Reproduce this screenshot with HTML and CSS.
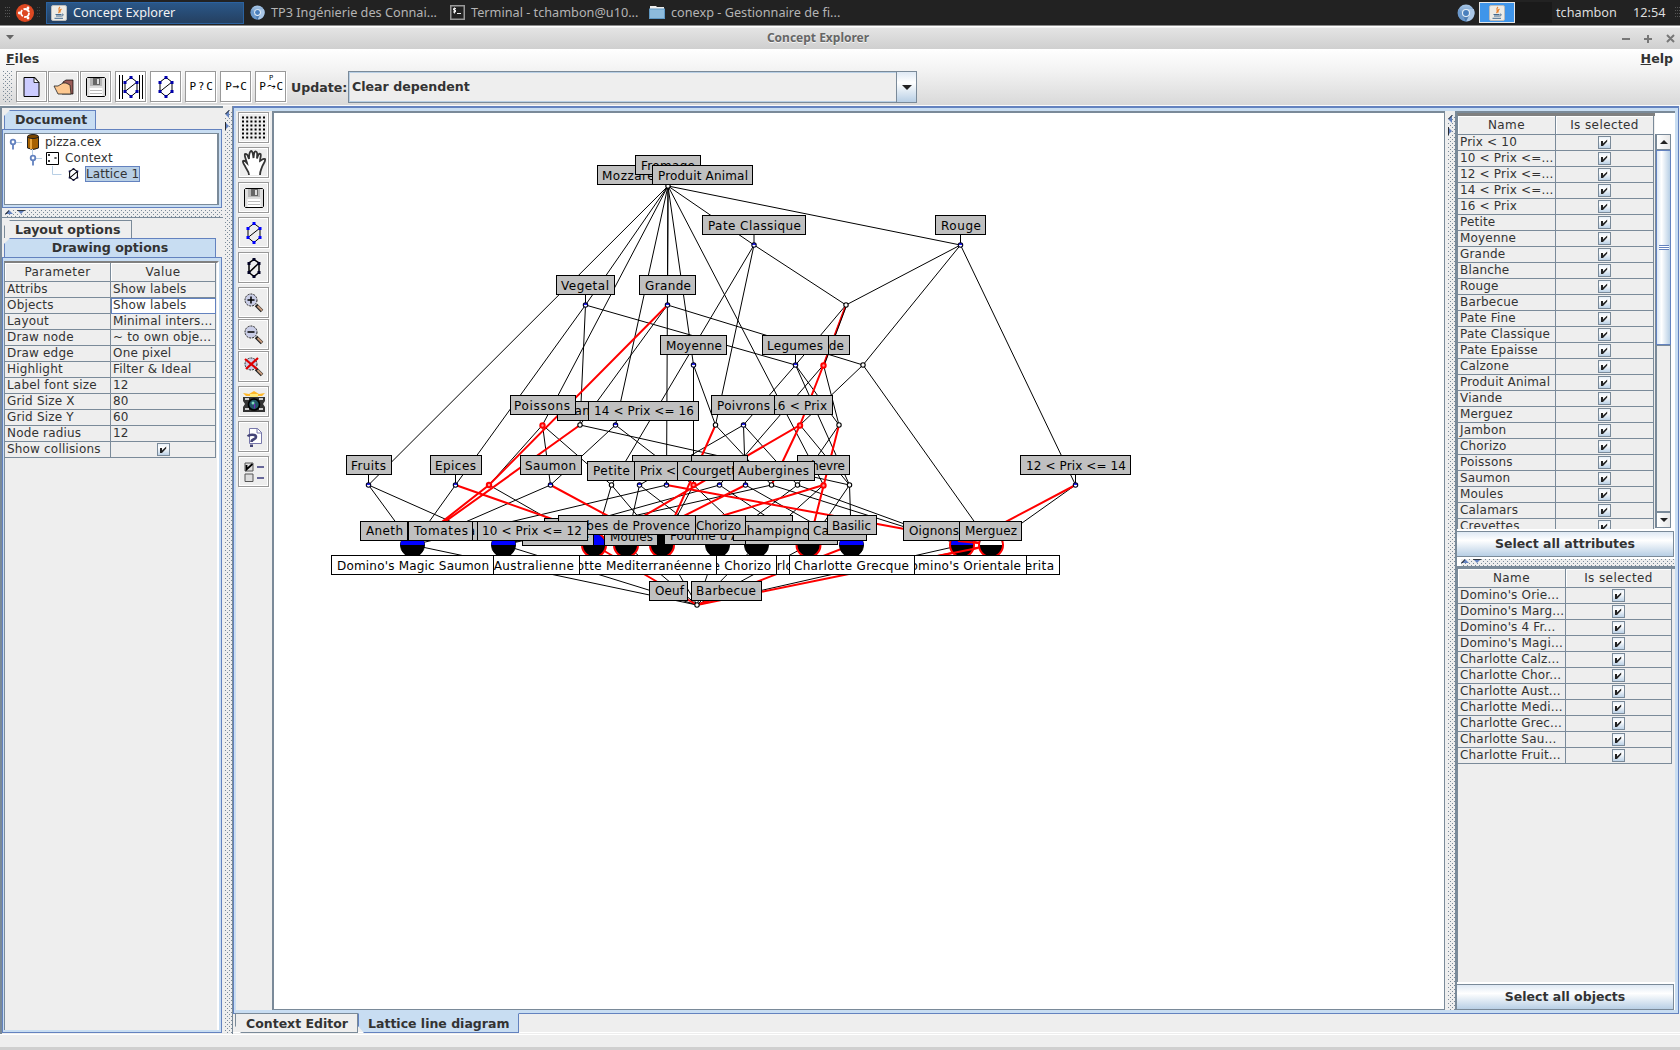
FILE: index.html
```html
<!DOCTYPE html>
<html lang="fr">
<head>
<meta charset="utf-8">
<title>Concept Explorer</title>
<link rel="stylesheet" href="styles.css">
</head>
<body>
<svg class="defs" width="0" height="0">
  <defs>
    <linearGradient id="box" x1="0" y1="0" x2="0" y2="1"><stop offset="0" stop-color="#e6eff8"/><stop offset=".35" stop-color="#fff"/><stop offset="1" stop-color="#b8cfe5"/></linearGradient>
    <linearGradient id="blueball" x1="0" y1="0" x2="0" y2="1"><stop offset="0" stop-color="#a9c8e8"/><stop offset="1" stop-color="#3c6ea8"/></linearGradient>
    <linearGradient id="half" x1="0" y1="0" x2="0" y2="1"><stop offset=".5" stop-color="#22f"/><stop offset=".5" stop-color="#fff"/></linearGradient>
    <symbol id="check" viewBox="0 0 13 13"><rect x=".5" y=".5" width="12" height="12" fill="url(#box)" stroke="#7a8a99"/><path d="M3 5h2v2.600L9.200 3.400V5.600L5 10H3z" fill="#222"/></symbol>
    <symbol id="java" viewBox="0 0 16 16"><rect x=".5" y=".5" width="15" height="15" rx="1.500" fill="#ecebe6" stroke="#bbb"/><path d="M9 2C6 4.500 10 5.500 7.500 8M10.500 4C8.500 5 9.500 6 8.800 7.500" fill="none" stroke="#e8802a" stroke-width="1.200"/><path d="M4.500 9.500h6M5 11h5.500M3.500 13.300h8.500M11 9c2 0 1.500 2-.5 2" fill="none" stroke="#41688f"/></symbol>
    <symbol id="chromium" viewBox="0 0 16 16"><circle cx="8" cy="8" r="7.500" fill="url(#blueball)"/><path d="M8 4.500h6.800A7.500 7.500 0 0 1 8 15.500L11 10z" fill="#a9c6e6"/><path d="M2 4l3 6 3 5.500A7.500 7.500 0 0 1 2 4z" fill="#6b98cb"/><circle cx="8" cy="8" r="3.600" fill="#e6eff8"/><circle cx="8" cy="8" r="2.600" fill="#4a7fbd"/></symbol>
    <symbol id="floppy" viewBox="0 0 20 20"><path d="M1.500.5h17l1 1v17l-1 1h-17l-1-1v-17z" fill="#ddd" stroke="#000"/><path d="M4 1h12v8H4z" fill="#b5b5b5"/><path d="M7 1h7v7H7z" fill="#666"/><path d="M11 2h2v5h-2z" fill="#ddd"/><path d="M3.500 11h13v8h-13z" fill="#fff"/><path d="M4 13.500h12M4 16.500h12" stroke="#bbb"/></symbol>
    <symbol id="hex" viewBox="0 0 16 24"><path d="M8 2.500L14 7v9.500L8 21.500 2 16.500V7zM2 16.500L14 7" fill="none" stroke="#000"/><path d="M6.500 1h3v3h-3zM.5 6h3v3h-3zM12.500 6h3v3h-3zM.5 15h3v3h-3zM12.500 15h3v3h-3zM6.500 20h3v3h-3z" fill="currentColor"/></symbol>
    <symbol id="lens" viewBox="0 0 20 20"><path d="M12 12l6 6" stroke="#222" stroke-width="3.600"/><path d="M13.500 13l4.500 4.500" stroke="#c69a7c" stroke-width="2"/><circle cx="7" cy="7" r="6" fill="#c9cde6" stroke="#222" stroke-dasharray="2 1"/></symbol>
    <symbol id="up" viewBox="0 0 8 4"><path d="M0 4L4 0l4 4z" fill="#6382bf"/><path d="M0 4L4 0v1L1.500 4z" fill="#222"/></symbol>
    <symbol id="down" viewBox="0 0 8 4"><path d="M0 0l4 4 4-4z" fill="#6382bf"/><path d="M0 0h8v.8H0z" fill="#222"/></symbol>
    <symbol id="left" viewBox="0 0 4 8"><path d="M4 0L0 4l4 4z" fill="#6382bf"/><path d="M4 0L0 4h1l3-3z" fill="#222"/></symbol>
    <symbol id="right" viewBox="0 0 4 8"><path d="M0 0l4 4-4 4z" fill="#6382bf"/><path d="M0 0h.9v8H0z" fill="#222"/></symbol>
  </defs>
</svg>

<header class="panel">
  <span class="grip"></span>
  <svg class="ubuntu" width="18" height="18" viewBox="0 0 18 18"><circle cx="9" cy="9" r="9" fill="#dd4822"/><circle cx="9" cy="9" r="4" fill="none" stroke="#fff" stroke-width="1.800" stroke-dasharray="7 1.400"/><circle cx="3.300" cy="9" r="1.400" fill="#fff"/><circle cx="12" cy="4" r="1.400" fill="#fff"/><circle cx="12" cy="14" r="1.400" fill="#fff"/></svg>
  <span class="grip dim"></span>
  <div class="task active"><svg width="16" height="16"><use href="#java"/></svg><span>Concept Explorer</span></div>
  <div class="task second"><svg width="15" height="15"><use href="#chromium"/></svg><span>TP3 Ingénierie des Connai...</span></div>
  <div class="task third"><svg width="15" height="15" viewBox="0 0 15 15"><rect x=".75" y=".75" width="13.500" height="13.500" fill="#222" stroke="#999" stroke-width="1.500"/><path d="M6 3.500H3.500V5H5.500V7H3M4.500 2.500v6M7 8.500h4" stroke="#eee" fill="none"/></svg><span>Terminal - tchambon@u10...</span></div>
  <div class="task fourth"><svg width="16" height="13" viewBox="0 0 16 13"><path d="M1 0h6l1 1h7v4H1z" fill="#eee"/><rect x=".5" y="3" width="15" height="9.500" fill="#8dbbdc" stroke="#5f98c4"/></svg><span>conexp - Gestionnaire de fi...</span></div>
  <svg class="tray" width="18" height="18"><use href="#chromium"/></svg>
  <div class="pager on"><svg width="16" height="16"><use href="#java"/></svg></div>
  <div class="pager"></div>
  <span class="user">tchambon</span>
  <span class="clock">12:54</span>
  <span class="grip end"></span>
</header>

<div class="titlebar">
  <svg width="8" height="5" viewBox="0 0 8 5"><path d="M0 0h8L4 4.500z" fill="#666"/></svg>
  <b>Concept Explorer</b>
  <svg class="winbtns" width="54" height="10" viewBox="0 0 54 10"><path d="M0 5h8M22 5h8M26 1v8M45 1l7 7M52 1l-7 7" stroke="#777" stroke-width="2" fill="none"/></svg>
</div>

<nav class="menubar"><span class="files"><u>F</u>iles</span><span class="help"><u>H</u>elp</span></nav>

<div class="toolbar">
  <span class="dots handle"></span>
  <button class="btn"><svg width="19" height="22" viewBox="0 0 19 22"><path d="M2 1.500h11l4 5v14H2z" fill="#ccf" stroke="#000"/><path d="M12 1.500v5h5z" fill="#fff" stroke="#000" stroke-width=".8"/></svg></button>
  <button class="btn g1"><svg width="22" height="18" viewBox="0 0 22 18"><path d="M10 4l3-2h7v14H9z" fill="#9a5c58" stroke="#000" stroke-width=".7"/><path d="M1 8h4l5-3h3l4 2 1 9H5z" fill="#fdc890" stroke="#222" stroke-width=".8"/></svg></button>
  <button class="btn g1"><svg width="20" height="20"><use href="#floppy"/></svg></button>
  <button class="btn w g4"><svg width="26" height="26" viewBox="0 0 26 26"><path d="M1.500 1v24M4.500 1v24M21.500 1v24M24.500 1v24" stroke="#000"/><use href="#hex" x="5" y="1" width="16" height="24" color="#00a"/></svg></button>
  <button class="btn w g4"><svg width="16" height="24" color="#00a"><use href="#hex"/></svg></button>
  <button class="btn w g4 mono">P?C</button>
  <button class="btn w g4 mono tight">P→C</button>
  <button class="btn w g4 mono tight"><i>P</i>P⤳C</button>
  <label class="update">Update:</label>
  <div class="combo"><span>Clear dependent</span><div class="arrow"><svg width="10" height="5" viewBox="0 0 10 5"><path d="M0 0h10L5 5z" fill="#222"/></svg></div></div>
</div>

<main class="main">
  <aside class="left">
    <div class="tabrow"><span class="tab sel doc">Document</span></div>
    <div class="tabbody doc">
      <div class="tree">
        <svg class="lines" width="64" height="56" viewBox="0 0 64 56"><path d="M10 8.500h7M27.500 15v9M31 24.500h6M47.500 32v8.500h9" stroke="#b8cfe5" fill="none"/><g fill="#fff" stroke="#6382bf" stroke-width="1.800"><circle cx="8" cy="8" r="2.300"/><path d="M8 10.500v5"/><circle cx="28" cy="24" r="2.300"/><path d="M28 26.500v5"/></g></svg>
        <div class="ti a"><svg width="12" height="16" viewBox="0 0 12 16"><path d="M.5 3v11q5.500 3 11 0V3z" fill="#a86200" stroke="#222"/><path d="M3 4h2v11H3z" fill="#e9a53c"/><ellipse cx="6" cy="2.500" rx="5.500" ry="2" fill="#7a4600" stroke="#222"/></svg>pizza.cex</div>
        <div class="ti b"><svg width="13" height="13" viewBox="0 0 13 13"><path d="M.5.500h12v12H.5z" fill="#fff" stroke="#000"/><path d="M2 2l2 2M4 2L2 4M8.500 5l2 2M10.500 5l-2 2M2 8l2 2M4 8l-2 2" stroke="#000" stroke-width=".8"/></svg>Context</div>
        <div class="ti c"><svg width="11" height="15" viewBox="0 0 11 15"><path d="M5.500 1L10 4v7l-4.500 3L1 11V4zM1.500 11L10 4" fill="none" stroke="#000" stroke-width="1.200"/><path d="M4.500 0h2v2h-2zM0 3h2v2H0zM9 3h2v2H9zM0 10h2v2H0zM9 10h2v2H9zM4.500 13h2v2h-2z" fill="#114"/></svg><span>Lattice 1</span></div>
      </div>
    </div>
    <div class="hsplit dots"><svg width="8" height="4"><use href="#up"/></svg><svg width="8" height="4"><use href="#down"/></svg></div>
    <div class="lower">
      <div class="tabrow"><span class="tab lay">Layout options</span></div>
      <div class="tabrow"><span class="tab sel draw">Drawing options</span></div>
      <div class="tabbody opts">
        <div class="tbl params">
          <div class="h">Parameter</div><div class="h">Value</div>
          <div>Attribs</div><div>Show labels</div>
          <div>Objects</div><div class="edit">Show labels</div>
          <div>Layout</div><div>Minimal inters...</div>
          <div>Draw node</div><div>~ to own obje...</div>
          <div>Draw edge</div><div>One pixel</div>
          <div>Highlight</div><div>Filter &amp; Ideal</div>
          <div>Label font size</div><div>12</div>
          <div>Grid Size X</div><div>80</div>
          <div>Grid Size Y</div><div>60</div>
          <div>Node radius</div><div>12</div>
          <div>Show collisions</div><div class="c"><svg><use href="#check"/></svg></div>
        </div>
      </div>
    </div>
  </aside>

  <div class="vsplit dots"><svg width="4" height="8"><use href="#left"/></svg><svg width="4" height="8"><use href="#right"/></svg></div>

  <section class="center">
    <div class="frame">
      <div class="tools">
        <button class="btn"><svg width="23" height="23" viewBox="0 0 23 23"><path d="M0 1.500h23M0 5.500h23M0 9.500h23M0 13.500h23M0 17.500h23M0 21.500h23" stroke="#000" stroke-width="2" stroke-dasharray="2 2.200"/></svg></button>
        <button class="btn g4"><svg width="26" height="26" viewBox="0 0 26 26"><path d="M8 25c0-4-3-6-4-9-1-2-2.500-3-2-5 2-1 3 1 4 2C5 9 3 6 4 4c2-1 3 2 4 5C8 5 8 2 10 1c2 0 2 4 2.500 7C13 4 13 1 15 1.500c2 .5 1 4 1 7C17 5 18 3 19.500 4c1 1-.5 4-.5 7 2-1 3-3 5-2 1 2-2 5-3 8-1 3-2 4-2 8" fill="#fff" stroke="#333" stroke-width="1.800"/></svg></button>
        <button class="btn g4"><svg width="20" height="20"><use href="#floppy"/></svg></button>
        <button class="btn g4"><svg width="16" height="24" color="#00f"><use href="#hex"/></svg></button>
        <button class="btn g4"><svg width="14" height="20" viewBox="0 0 14 20"><path d="M7 1.500L12 5v9.500L7 18.500 2 14.500V5zM2 14.500L12 5" fill="none" stroke="#000" stroke-width="1.500"/><path d="M5.500 0h3v3h-3zM.5 4h3v3h-3zM10.500 4h3v3h-3zM.5 13h3v3h-3zM10.500 13h3v3h-3zM5.500 17h3v3h-3z" fill="#002"/></svg></button>
        <button class="btn g4"><svg width="20" height="20" viewBox="0 0 20 20"><use href="#lens"/><path d="M3.500 7h7M7 3.500v7" stroke="#000" stroke-width="1.500"/></svg></button>
        <button class="btn g1"><svg width="20" height="20" viewBox="0 0 20 20"><use href="#lens"/><path d="M3.500 7h7" stroke="#000" stroke-width="1.500"/></svg></button>
        <button class="btn g1"><svg width="20" height="20" viewBox="0 0 20 20"><use href="#lens"/><path d="M1 2l12 10M14 1L2 12" stroke="#d00" stroke-width="2.200"/></svg></button>
        <button class="btn g4"><svg width="24" height="22" viewBox="0 0 24 22"><path d="M1 6h22v4l-2 3 2 3v5H1v-5l2-3-2-3z" fill="#333"/><path d="M3 8h4M17 8h4M3 18h4M17 18h4" stroke="#ccc" stroke-width="2"/><path d="M1 2l6 1 5-3 5 3 6-1-3 3H4z" fill="#ffb82a"/><path d="M8 3h8v3H8z" fill="#ffe97a"/><circle cx="12" cy="13.500" r="5.500" fill="#256" stroke="#000" stroke-width="1.600"/><path d="M12 12a4 4 0 0 1 0 6z" fill="#72b"/><circle cx="11" cy="12" r="1.500" fill="#7fd8c0"/></svg></button>
        <button class="btn g4"><svg width="16" height="22" viewBox="0 0 16 22"><path d="M3.500 2.500h8l4 4v11h-12z" fill="#fff" stroke="#77a"/><path d="M11 2v5h5" fill="none" stroke="#77a"/><path d="M2 10.500C3 8 10 8 10 11c0 3-4.500 1.500-4.500 5" fill="none" stroke="#447" stroke-width="2.600"/><path d="M4 18.500h3v2.500H4z" fill="#447"/></svg></button>
        <button class="btn g4"><svg width="20" height="20" viewBox="0 0 20 20"><path d="M1 1h8v8H1zM1 12h8v7.500H1z" fill="#ddd" stroke="#555"/><path d="M2.500 3v4.500L8.500 2" stroke="#000" stroke-width="1.800" fill="none"/><path d="M13 5h7M13 16h7" stroke="#669" stroke-width="1.800"/></svg></button>
      </div>

      <div class="canvas">
        <svg class="lattice" viewBox="274 113 1170 895">
          <path class="edge" d="M668 186L368.500 485M668 186L585.500 305M668 186L542.500 425M668 186L615.500 425M668 186L667.500 305M668 186L666.500 485M668 186L693.500 365M668 186L823.500 485M668 186L754 245M668 186L960.500 245
            M960.500 245L846 305M960.500 245L863 365M960.500 245L1075.500 485M863 365L991 545M754 245L846 305M754 245L715.500 425M754 245L611.500 485
            M585.500 305L455.500 485M585.500 305L580 425M585.500 305L795.500 365M667.500 305L863 365M667.500 305L580 425M846 305L795.500 365M846 305L823.500 365
            M693.500 365L715.500 425M693.500 365V485M795.500 365L743.500 425M795.500 365L849.500 485M795.500 365L839 425M823.500 365L839 425M823.500 365L719.500 485M863 365L800 425
            M580 425L849.500 485M615.500 425L550.500 485M615.500 425L693.500 485M715.500 425L771.500 485M743.500 425L639.500 485M743.500 425L745.500 485M743.500 425L797.500 485M800 425L849.500 485M839 425L797.500 485
            M542.500 425L550.500 485M542.500 425L611.500 485M542.500 425L489 485M489 485L412.500 545M489 485L594 545M368.500 485L412.500 545M368.500 485L503.500 545M455.500 485L412.500 545M550.500 485L412.500 545
            M611.500 485L594 545M611.500 485L662 545M639.500 485L626 545M639.500 485L717.500 545M666.500 485L412.500 545M693.500 485L662 545M693.500 485L756.500 545M719.500 485L503.500 545M719.500 485L808.500 545M745.500 485L851.500 545
            M771.500 485L503.500 545M771.500 485L962 545M797.500 485L962 545M797.500 485L717.500 545M823.500 485L756.500 545M849.500 485L808.500 545M849.500 485L851.500 545M1075.500 485L991 545
            M412.500 545L697 605M503.500 545L697 605M626 545L697 605M662 545L697 605M717.500 545L697 605M756.500 545L697 605M808.500 545L697 605M962 545L697 605"/>
          <path class="edge hot" d="M667.500 305L489 485L412.500 545M846 305L823.500 365L800 425L594 545M800 425L771.500 485M715.500 425L662 545M839 425L808.500 545M580 425L412.500 545M455.500 485L626 545M550.500 485L662 545M666.500 485L991 545M745.500 485L626 545M823.500 485L626 545M1075.500 485L962 545M594 545L697 605M851.500 545L697 605M991 545L697 605"/>
          <path class="edge" d="M846 307L825 363M754 234v10M960.500 234v10M585.500 294v10M667.500 294v10M795.500 354v10M368.500 474v10M455.500 474v10M1075.500 474v10"/>
          <g class="node">
            <circle cx="668" cy="186" r="2.200"/><circle cx="846" cy="305" r="2.200"/><circle cx="863" cy="365" r="2.200"/><circle cx="580" cy="425" r="2.200"/><circle cx="715.500" cy="425" r="2.200"/><circle cx="839" cy="425" r="2.200"/><circle cx="611.500" cy="485" r="2.200"/><circle cx="771.500" cy="485" r="2.200"/><circle cx="797.500" cy="485" r="2.200"/><circle cx="849.500" cy="485" r="2.200"/><circle cx="697" cy="605" r="2.200"/>
          </g>
          <g class="node attr">
            <circle cx="754" cy="245" r="2.200"/><circle cx="960.500" cy="245" r="2.200"/><circle cx="585.500" cy="305" r="2.200"/><circle cx="667.500" cy="305" r="2.200"/><circle cx="693.500" cy="365" r="2.200"/><circle cx="795.500" cy="365" r="2.200"/><circle cx="615.500" cy="425" r="2.200"/><circle cx="743.500" cy="425" r="2.200"/><circle cx="368.500" cy="485" r="2.200"/><circle cx="455.500" cy="485" r="2.200"/><circle cx="550.500" cy="485" r="2.200"/><circle cx="639.500" cy="485" r="2.200"/><circle cx="666.500" cy="485" r="2.200"/><circle cx="719.500" cy="485" r="2.200"/><circle cx="745.500" cy="485" r="2.200"/><circle cx="1075.500" cy="485" r="2.200"/>
          </g>
          <g class="node hotnode">
            <circle cx="823.500" cy="365.500" r="2.200"/><circle cx="542.500" cy="425.500" r="2.200"/><circle cx="800" cy="425.500" r="2.200"/><circle cx="489" cy="485" r="2.200"/><circle cx="693.500" cy="485" r="2.200"/><circle cx="823.500" cy="485.500" r="2.200"/>
          </g>
          <g class="obj">
            <circle cx="412.500" cy="545" r="12"/><circle cx="503.500" cy="545" r="12"/><circle class="r" cx="594" cy="545" r="12"/><circle class="r" cx="626" cy="545" r="12"/><circle class="r" cx="662" cy="545" r="12"/><circle cx="717.500" cy="545" r="12"/><circle cx="756.500" cy="545" r="12"/><circle class="r" cx="808.500" cy="545" r="12"/><circle cx="851.500" cy="545" r="12"/><circle class="r" cx="962" cy="545" r="12"/><circle class="r" cx="991" cy="545" r="12"/>
          </g>
          <path fill="#00f" d="M400.500 545a12 12 0 0 1 24 0zM491.500 545a12 12 0 0 1 24 0zM583 545a11 11 0 0 1 22 0zM839.500 545a12 12 0 0 1 24 0zM951 545a11 11 0 0 1 22 0z"/>
          <path fill="#fff" d="M980 545a11 11 0 0 1 22 0z"/>
          <path class="edge hot" d="M958 541l20 2M978 548l-40 8"/>

          <g class="lab">
            <rect x="597.500" y="165.500" width="80" height="19"/><text x="602" y="180" textLength="68">Mozzarella</text>
            <rect x="635.500" y="155.500" width="65" height="19"/><text x="641" y="170" textLength="54">Fromage</text>
            <rect x="652.500" y="165.500" width="100" height="19"/><text x="658" y="180" textLength="90">Produit Animal</text>
            <rect x="702.500" y="215.500" width="103" height="19"/><text x="708" y="230" textLength="93">Pate Classique</text>
            <rect x="935.500" y="215.500" width="50" height="19"/><text x="941" y="230" textLength="40">Rouge</text>
            <rect x="556.500" y="275.500" width="58" height="19"/><text x="561" y="290" textLength="48">Vegetal</text>
            <rect x="639.500" y="275.500" width="56" height="19"/><text x="645" y="290" textLength="46">Grande</text>
            <rect x="660.500" y="335.500" width="66" height="19"/><text x="666" y="350" textLength="56">Moyenne</text>
            <rect x="796.500" y="335.500" width="53" height="19"/><text x="801" y="350" textLength="43">Viande</text>
            <rect x="762.500" y="335.500" width="66" height="19"/><text x="767" y="350" textLength="56">Legumes</text>
            <rect x="557.500" y="401.500" width="60" height="19"/><text x="562" y="415" textLength="51">Blanche</text>
            <rect x="510.500" y="395.500" width="65" height="19"/><text x="514" y="410" textLength="56">Poissons</text>
            <rect x="588.500" y="401.500" width="110" height="19"/><text x="594" y="415" textLength="100">14 &lt; Prix &lt;= 16</text>
            <rect x="764.500" y="395.500" width="68" height="19"/><text x="770" y="410" textLength="57">16 &lt; Prix</text>
            <rect x="711.500" y="395.500" width="63" height="19"/><text x="717" y="410" textLength="53">Poivrons</text>
            <rect x="346.500" y="455.500" width="45" height="19"/><text x="351" y="470" textLength="35">Fruits</text>
            <rect x="430.500" y="455.500" width="51" height="19"/><text x="435" y="470" textLength="41">Epices</text>
            <rect x="520.500" y="455.500" width="61" height="19"/><text x="525" y="470" textLength="51">Saumon</text>
            <rect x="632.500" y="455.500" width="60" height="19"/>
            <rect x="691.500" y="455.500" width="56" height="19"/>
            <rect x="797.500" y="455.500" width="52" height="19"/><text x="803" y="470" textLength="42">Chevre</text>
            <rect x="587.500" y="461.500" width="47" height="19"/><text x="593" y="475" textLength="37">Petite</text>
            <rect x="634.500" y="461.500" width="66" height="19"/><text x="640" y="475" textLength="55">Prix &lt; 10</text>
            <rect x="677.500" y="461.500" width="76" height="19"/><text x="682" y="475" textLength="68">Courgettes</text>
            <rect x="733.500" y="461.500" width="81" height="19"/><text x="738" y="475" textLength="71">Aubergines</text>
            <rect x="1020.500" y="455.500" width="110" height="19"/><text x="1026" y="470" textLength="100">12 &lt; Prix &lt;= 14</text>

            <rect x="522.500" y="526.500" width="71" height="19"/><text x="528" y="541" textLength="61">Persillade</text>
            <rect x="604.500" y="526.500" width="53" height="19"/><text x="610" y="541" textLength="43">Moules</text>
            <rect x="664.500" y="525.500" width="128" height="19"/><text x="670" y="540" textLength="106">Fourme d'Ambert</text>
            <rect x="745.500" y="525.500" width="92" height="19"/>
            <rect x="544.500" y="518.500" width="30" height="19"/>
            <rect x="695.500" y="515.500" width="97" height="19"/>
            <rect x="733.500" y="521.500" width="92" height="19"/><text x="738" y="535" textLength="86">Champignons</text>
            <rect x="690.500" y="515.500" width="55" height="19"/><text x="696" y="530" textLength="45">Chorizo</text>
            <rect x="558.500" y="515.500" width="137" height="19"/><text x="564" y="530" textLength="126">Herbes de Provence</text>
            <rect x="808.500" y="521.500" width="58" height="19"/><text x="813" y="535" textLength="48">Calzone</text>
            <rect x="827.500" y="515.500" width="49" height="19"/><text x="832" y="530" textLength="39">Basilic</text>
            <rect x="360.500" y="521.500" width="47" height="19"/><text x="366" y="535" textLength="37">Aneth</text>
            <rect x="440.500" y="521.500" width="37" height="19"/><text x="475" y="535" text-anchor="end">a</text>
            <rect x="408.500" y="521.500" width="64" height="19"/><text x="414" y="535" textLength="54">Tomates</text>
            <rect x="477.500" y="521.500" width="110" height="19"/><text x="482" y="535" textLength="100">10 &lt; Prix &lt;= 12</text>
            <rect x="903.500" y="521.500" width="60" height="19"/><text x="909" y="535" textLength="50">Oignons</text>
            <rect x="959.500" y="521.500" width="62" height="19"/><text x="965" y="535" textLength="52">Merguez</text>
            <rect x="649.500" y="581.500" width="38" height="19"/><text x="655" y="595" textLength="29">Oeuf</text>
            <rect x="691.500" y="581.500" width="70" height="19"/><text x="696" y="595" textLength="60">Barbecue</text>
          </g>
          <g class="lab white">
            <rect x="917.500" y="555.500" width="142" height="19"/><text x="922" y="570" textLength="132">Domino's Margherita</text>
            <rect x="890.500" y="555.500" width="136" height="19"/><text x="901" y="570" textLength="120">Domino's Orientale</text>
            <rect x="751.500" y="555.500" width="120" height="19"/><text x="753" y="570" textLength="110">Charlotte Calzone</text>
            <rect x="789.500" y="555.500" width="125" height="19"/><text x="794" y="570" textLength="115">Charlotte Grecque</text>
            <rect x="656.500" y="555.500" width="120" height="19"/><text x="662" y="570" textLength="109">Charlotte Chorizo</text>
            <rect x="434.500" y="555.500" width="145" height="19"/><text x="430" y="570" textLength="144">Charlotte Australienne</text>
            <rect x="331.500" y="555.500" width="162" height="19"/><text x="337" y="570" textLength="152">Domino's Magic Saumon</text>
            <svg x="579" y="555" width="138" height="21" viewBox="579 555 138 21"><rect x="579.500" y="555.500" width="137" height="19"/><text x="544" y="570" textLength="168">Charlotte Mediterranéenne</text></svg>
          </g>
        </svg>
      </div>

      <div class="vsplit dots right"><svg width="4" height="8"><use href="#left"/></svg><svg width="4" height="8"><use href="#right"/></svg></div>

      <div class="side">
        <div class="pane attrs">
          <div class="tbl">
            <div class="h">Name</div><div class="h">Is selected</div>
            <div>Prix &lt; 10</div><div class="c"><svg><use href="#check"/></svg></div>
            <div>10 &lt; Prix &lt;=...</div><div class="c"><svg><use href="#check"/></svg></div>
            <div>12 &lt; Prix &lt;=...</div><div class="c"><svg><use href="#check"/></svg></div>
            <div>14 &lt; Prix &lt;=...</div><div class="c"><svg><use href="#check"/></svg></div>
            <div>16 &lt; Prix</div><div class="c"><svg><use href="#check"/></svg></div>
            <div>Petite</div><div class="c"><svg><use href="#check"/></svg></div>
            <div>Moyenne</div><div class="c"><svg><use href="#check"/></svg></div>
            <div>Grande</div><div class="c"><svg><use href="#check"/></svg></div>
            <div>Blanche</div><div class="c"><svg><use href="#check"/></svg></div>
            <div>Rouge</div><div class="c"><svg><use href="#check"/></svg></div>
            <div>Barbecue</div><div class="c"><svg><use href="#check"/></svg></div>
            <div>Pate Fine</div><div class="c"><svg><use href="#check"/></svg></div>
            <div>Pate Classique</div><div class="c"><svg><use href="#check"/></svg></div>
            <div>Pate Epaisse</div><div class="c"><svg><use href="#check"/></svg></div>
            <div>Calzone</div><div class="c"><svg><use href="#check"/></svg></div>
            <div>Produit Animal</div><div class="c"><svg><use href="#check"/></svg></div>
            <div>Viande</div><div class="c"><svg><use href="#check"/></svg></div>
            <div>Merguez</div><div class="c"><svg><use href="#check"/></svg></div>
            <div>Jambon</div><div class="c"><svg><use href="#check"/></svg></div>
            <div>Chorizo</div><div class="c"><svg><use href="#check"/></svg></div>
            <div>Poissons</div><div class="c"><svg><use href="#check"/></svg></div>
            <div>Saumon</div><div class="c"><svg><use href="#check"/></svg></div>
            <div>Moules</div><div class="c"><svg><use href="#check"/></svg></div>
            <div>Calamars</div><div class="c"><svg><use href="#check"/></svg></div>
            <div>Crevettes</div><div class="c"><svg><use href="#check"/></svg></div>
          </div>
          <div class="scroll">
            <div class="sb"><svg width="8" height="4" viewBox="0 0 8 4"><path d="M0 4L4 0l4 4z" fill="#222"/></svg></div>
            <div class="thumb"><i></i></div>
            <div class="track"></div>
            <div class="sb"><svg width="8" height="4" viewBox="0 0 8 4"><path d="M0 0h8L4 4z" fill="#222"/></svg></div>
          </div>
        </div>
        <button class="wide">Select all attributes</button>
        <div class="hsplit dots"><svg width="8" height="4"><use href="#up"/></svg><svg width="8" height="4"><use href="#down"/></svg></div>
        <div class="pane objs">
          <div class="tbl">
            <div class="h">Name</div><div class="h">Is selected</div>
            <div>Domino's Orie...</div><div class="c"><svg><use href="#check"/></svg></div>
            <div>Domino's Marg...</div><div class="c"><svg><use href="#check"/></svg></div>
            <div>Domino's 4 Fr...</div><div class="c"><svg><use href="#check"/></svg></div>
            <div>Domino's Magi...</div><div class="c"><svg><use href="#check"/></svg></div>
            <div>Charlotte Calz...</div><div class="c"><svg><use href="#check"/></svg></div>
            <div>Charlotte Chor...</div><div class="c"><svg><use href="#check"/></svg></div>
            <div>Charlotte Aust...</div><div class="c"><svg><use href="#check"/></svg></div>
            <div>Charlotte Medi...</div><div class="c"><svg><use href="#check"/></svg></div>
            <div>Charlotte Grec...</div><div class="c"><svg><use href="#check"/></svg></div>
            <div>Charlotte Sau...</div><div class="c"><svg><use href="#check"/></svg></div>
            <div>Charlotte Fruit...</div><div class="c"><svg><use href="#check"/></svg></div>
          </div>
        </div>
        <button class="wide last">Select all objects</button>
      </div>
    </div>
    <div class="bottomtabs"><span class="btab">Context Editor</span><span class="btab sel">Lattice line diagram</span></div>
  </section>
</main>
<footer class="status"></footer>
</body>
</html>
```
FILE: styles.css
```css
* { box-sizing: border-box; }
body {
  margin: 0; width: 1680px; height: 1050px; overflow: hidden;
  display: flex; flex-direction: column;
  background: #eee; color: #333;
  font: 12.600px/16px "DejaVu Sans", sans-serif;
}
.defs { position: absolute; }
svg { display: block; flex: none; }
button { margin: 0; padding: 0; font: inherit; color: inherit; }

/* desktop panel */
.panel { height: 25px; flex: none; background: #222; color: #b4b4b4; display: flex; align-items: center; font: 12.700px/22px "Noto Sans", sans-serif; white-space: nowrap; }
.panel span { position: static; padding-bottom: 2px; }
.grip { width: 5px; height: 12px; margin: 0 6px 0 5px; background: conic-gradient(from 270deg at 1px 1px, #555 90deg, transparent 0) 0 0/2px 3px; }
.grip.dim { margin: 0 3px; width: 3px; opacity: .6; }
.grip.end { margin: 0 0 0 6px; }
.task { display: flex; align-items: center; gap: 6px; }
.task.active { width: 198px; height: 22px; padding-left: 4px; margin-left: 3px; background: linear-gradient(#2a5788, #254061); border: 1px solid #2b62a0; color: #f2f2f2; }
.second { width: 200px; margin-left: 6px; }
.third { width: 199px; }
.fourth { width: 240px; }
.tray { margin-left: auto; }
.pager { width: 37px; height: 21px; background: #1a1a1a; display: flex; align-items: center; justify-content: center; }
.pager.on { width: 36px; margin-left: 4px; background: #3f95ea; border: 1px solid #e6e6e6; }
.user { margin-left: 4px; color: #ddd; width: 62px; }
.clock { margin-left: 15px; color: #ddd; width: 36px; }

.titlebar { height: 24px; flex: none; display: flex; align-items: center; padding: 0 4px 0 6px; border-top: 1px solid #8c8c8c; background: linear-gradient(#fff 1px, #e4e4e4 2px, #cfcfcf); }
.titlebar b { margin: 1px auto 0; font: bold 12px/20px "Noto Sans", sans-serif; color: #666; text-shadow: 0 1px #f4f4f4; }
.winbtns { margin-top: 2px; }

.menubar { height: 21px; flex: none; display: flex; justify-content: space-between; padding: 2px 7px 0 6px; font-weight: bold; background: linear-gradient(#fff, #f3f3f3); }
.toolbar { height: 36px; flex: none; display: flex; padding: 1px 0 0 3px; background: linear-gradient(#f3f3f3, #d9d9d9); border-bottom: 1px solid #fafafa; }
.dots { background-color: #eee; background-image: conic-gradient(from 270deg at 1px 1px, #7a8a99 90deg, transparent 0), conic-gradient(from 270deg at 1px 1px, #7a8a99 90deg, transparent 0); background-size: 4px 4px; background-position: 0 0, 2px 2px; }
.handle { width: 9px; height: 31px; margin-right: 4px; background-color: transparent; }
.btn { position: relative; flex: none; width: 31px; height: 31px; display: flex; align-items: center; justify-content: center; background: #eee; border: 1px solid #999; box-shadow: inset 1px 1px #fff, inset -1px -1px #fff, 1px 1px #fff; }
.btn.w { background: #fff; }
.toolbar .g1 { margin-left: 1px; }
.toolbar .g4 { margin-left: 4px; }
.mono { font: 11px/12px "DejaVu Sans Mono", monospace; color: #000; letter-spacing: 1.700px; padding-left: 3px; }
.mono.tight { letter-spacing: .8px; padding-left: 2px; }
.mono i { position: absolute; left: 13px; top: 2px; font: 7px "DejaVu Sans Mono", monospace; }
.update { margin-left: 5px; width: 57px; font-weight: bold; line-height: 33px; }
.combo { width: 569px; height: 32px; display: flex; justify-content: space-between; border: 1px solid #7a8a99; box-shadow: inset 0 0 0 1px #b8cfe5; padding-left: 3px; font-weight: bold; line-height: 30px; background-color: #eee; }
.arrow { width: 20px; border-left: 1px solid #7a8a99; background: linear-gradient(#dfe9f4, #fff 35%, #b8cfe5); display: flex; align-items: center; justify-content: center; }

.main { flex: none; height: 928px; display: flex; }

/* left column */
.left { width: 223px; display: flex; flex-direction: column; padding-left: 2px; border-top: 2px solid #7a8a99; background: linear-gradient(90deg, #7a8a99 2px, #eee 2px); }
.tabrow { display: flex; padding-left: 2px; }
.tab { height: 18px; line-height: 18px; font-weight: bold; border: 1px solid #7a8a99; border-bottom: 0; padding-left: 10px; clip-path: polygon(6px 0, 100% 0, 100% 100%, 0 100%, 0 6px); }
.tab.sel { background: #c8ddf2; border-color: #6382bf; }
.tab.doc { width: 92px; margin-top: 2px; height: 19px; }
.tab.lay { width: 128px; }
.tab.draw { width: 212px; height: 19px; text-align: center; padding: 0; }
.tabbody { border: 1px solid #6382bf; background: #c8ddf2; padding: 3px 2px 2px 1px; }
.tabbody.doc { width: 220px; height: 79px; }
.tree { position: relative; height: 72px; background: #fff; border: 1px solid #7a8a99; border-right-width: 2px; }
.lines { position: absolute; left: 0; top: 0; }
.ti { display: flex; align-items: center; height: 16px; gap: 6px; font-size: 12px; letter-spacing: .1px; }
.ti.a { padding-left: 22px; }
.ti.b { padding-left: 41px; }
.ti.c { padding-left: 62px; gap: 5px; }
.ti span { height: 16px; line-height: 15px; background: #b8cfe5; border: 1px solid #6382bf; }
.hsplit { flex: none; height: 9px; display: flex; gap: 4px; padding: 2px 0 0 3px; background-clip: content-box; background-origin: content-box; }
.hsplit svg { background: #eee; }
.left .hsplit { width: 221px; }
.lower { flex: 1; display: flex; flex-direction: column; padding-top: 2px; border-top: 1px solid #7a8a99; background: #eee; }
.opts { flex: 1; width: 220px; margin-bottom: 1px; }
.params { height: 100%; border-right: 2px solid #fff; }

/* tables */
.tbl { display: grid; align-content: start; border-left: 1px solid #7a8a99; border-top: 2px solid #808080; background: #eee; font-size: 12px; white-space: nowrap; overflow: hidden; }
.tbl > div { height: 16px; line-height: 15px; padding-left: 2px; border-right: 1px solid #7a8a99; border-bottom: 1px solid #7a8a99; overflow: hidden; letter-spacing: .18px; }
.tbl > .h { height: 19px; line-height: 18px; padding: 0; text-align: center; box-shadow: inset 1px 1px #fff; letter-spacing: .4px; }
.tbl > .c { display: flex; justify-content: center; align-items: center; padding: 0; }
.c svg { width: 13px; height: 13px; }
.tbl > .edit { background: #fff; outline: 1px solid #6382bf; outline-offset: -1px; }
.params { grid-template-columns: 106px 105px; }

.vsplit { flex: none; width: 9px; display: flex; flex-direction: column; gap: 4px; padding: 4px 0 0 2px; background-clip: content-box; background-origin: content-box; }
.vsplit svg { background: #eee; }

/* center */
.center { flex: 1; min-width: 0; display: flex; flex-direction: column; border-left: 1px solid #7a8a99; }
.frame { height: 908px; flex: none; width: 1446px; display: flex; border: 1px solid #6382bf; border-top: 2px solid #6382bf; box-shadow: inset 2px 3px #c8ddf2, inset -3px -3px #c8ddf2; padding: 3px; }
.tools { width: 35px; padding: 1px 0 0 1px; background: #eee; }
.tools .g4 { margin-top: 4px; }
.tools .g1 { margin-top: 1px; }
.canvas { flex: none; width: 1173px; background: #fff; border: 1px solid #7a8a99; border-width: 2px 1px 1px 2px; }
.lattice { width: 1170px; height: 895px; }
.vsplit.right { width: 10px; padding-left: 3px; }
.side { flex: 1; display: flex; flex-direction: column; border-left: 2px solid #7a8a99; border-top: 2px solid #7a8a99; background: #fff; }
.attrs { height: 416px; display: flex; }
.attrs .tbl { flex: none; width: 198px; border-top-width: 3px; grid-template-columns: 98px 98px; }
.scroll { width: 16px; margin: 21px 0 1px; display: flex; flex-direction: column; border-left: 1px solid #7a8a99; }
.sb { flex: none; height: 16px; border: 1px solid #7a8a99; background: linear-gradient(90deg, #fff, #e8e8e8); display: flex; align-items: center; justify-content: center; }
.thumb { flex: none; height: 195px; border: 1px solid #6382bf; background: linear-gradient(90deg, #dce8f5, #fff 35%, #b8cfe5); display: flex; align-items: center; justify-content: center; }
.thumb i { width: 10px; height: 5px; background: repeating-linear-gradient(#6382bf 0 1px, #fff 1px 2px); }
.track { flex: 1; border: 1px solid #7a8a99; background: #eee; }
.wide { flex: none; width: 218px; height: 26px; margin: 2px 0 0 -1px; border: 1px solid #7a8a99; background: linear-gradient(#dfe9f4, #fff 35%, #b8cfe5); font-weight: bold; font-size: 12.500px; }
.side .hsplit { background-color: #eee; padding-left: 4px; }
.objs { flex: 1; background: #eee; }
.objs .tbl { height: 100%; border-top: 3px solid #7a8a99; grid-template-columns: 108px 106px; }

.bottomtabs { height: 20px; display: flex; padding-left: 2px; border-bottom: 1px solid #fff; margin-top: -1px; }
.btab { position: relative; width: 123px; height: 20px; line-height: 19px; padding-left: 10px; border: 1px solid #7a8a99; font-weight: bold; font-size: 12.500px; clip-path: polygon(0 0, 100% 0, 100% 100%, 6px 100%, 0 13px); white-space: nowrap; }
.btab.sel { width: 161px; padding-left: 9px; background: #c8ddf2; border-color: #6382bf; border-top-color: #c8ddf2; }

.status { flex: 1; border-top: 1px solid #fff; border-bottom: 3px solid #cfcfcf; background: #eee; }

/* lattice */
.edge { fill: none; stroke: #000; stroke-width: 1; }
.edge.hot { stroke: #f00; stroke-width: 2; }
.node circle { fill: #fff; stroke: #000; stroke-width: 1.100; }
.node.attr circle { fill: url(#half); stroke: #002; }
.node.hotnode circle { fill: #f99; stroke: #f00; stroke-width: 2; }
.obj circle { fill: #000; stroke: #000; }
.obj circle.r { stroke: #f00; stroke-width: 2; }
.lab rect { fill: #c0c0c0; stroke: #000; }
.lab.white rect { fill: #fff; }
.lab text { font: 12px "DejaVu Sans", sans-serif; fill: #000; }
```
